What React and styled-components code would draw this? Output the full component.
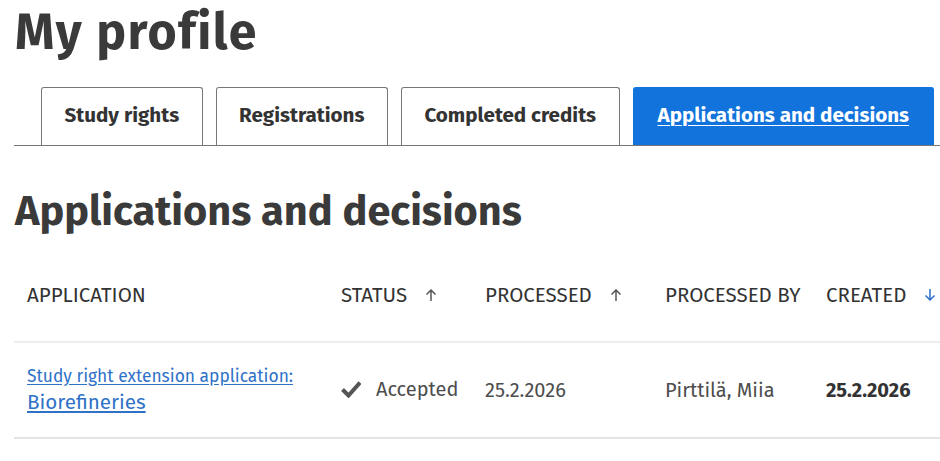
import React from 'react';
import styled, { createGlobalStyle } from 'styled-components';

const GlobalStyle = createGlobalStyle`
  html, body {
    margin: 0;
    padding: 0;
    background: #fff;
  }
  body {
    font-family: 'Fira Sans', Lato, 'Noto Sans', sans-serif;
    color: #333;
  }
`;

const tabs = [
  { label: 'Study rights' },
  { label: 'Registrations' },
  { label: 'Completed credits' },
  { label: 'Applications and decisions', active: true }
];

const columns = [
  { label: 'Application', width: 314 },
  { label: 'Status', width: 144, sort: 'up' },
  { label: 'Processed', width: 180, sort: 'up' },
  { label: 'Processed by', width: 161 },
  { label: 'Created', width: 127, sort: 'down', active: true }
];

const SortArrow = ({ dir, active }) => (
  <Arrow viewBox="0 0 12 14" width="12" height="14" $active={active}>
    {dir === 'up' ? (
      <path d="M6 13V2M1.5 6.5L6 2l4.5 4.5" />
    ) : (
      <path d="M6 1v11M1.5 7.5L6 12l4.5-4.5" />
    )}
  </Arrow>
);

const CheckIcon = () => (
  <svg viewBox="0 0 20 18" width="20" height="18">
    <path d="M1.5 9.5l6 6L19 2.5" fill="none" stroke="#555" strokeWidth="4" strokeLinecap="butt" />
  </svg>
);

const App = () => (
  <>
    <GlobalStyle />
    <Page>
      <Title>My profile</Title>
      <TabBar>
        {tabs.map(tab => (
          <Tab key={tab.label} $active={tab.active}>
            <TabLabel $active={tab.active}>{tab.label}</TabLabel>
          </Tab>
        ))}
      </TabBar>

      <SubTitle>Applications and decisions</SubTitle>

      <Table>
        <colgroup>
          {columns.map(col => (
            <col key={col.label} style={{ width: col.width }} />
          ))}
        </colgroup>
        <thead>
          <tr>
            {columns.map(col => (
              <Th key={col.label}>
                <ThInner>
                  {col.label}
                  {col.sort && <SortArrow dir={col.sort} active={col.active} />}
                </ThInner>
              </Th>
            ))}
          </tr>
        </thead>
        <tbody>
          <tr>
            <Td>
              <AppLink href="#">
                <LinkType>Study right extension application:</LinkType>
                <LinkName>Biorefineries</LinkName>
              </AppLink>
            </Td>
            <Td>
              <Status>
                <CheckIcon />
                Accepted
              </Status>
            </Td>
            <Td>25.2.2026</Td>
            <Td>Pirttilä, Miia</Td>
            <Td $bold>25.2.2026</Td>
          </tr>
        </tbody>
      </Table>
    </Page>
  </>
);

// === Styled Components ===

const Page = styled.div`
  padding: 0 0 0 14px;
  width: 926px;
`;

const Title = styled.h1`
  margin: 0;
  padding: 3px 0 0 1px;
  font-size: 50px;
  line-height: 58px;
  font-weight: 700;
  color: #3a3a3a;
  letter-spacing: 1.4px;
`;

const TabBar = styled.div`
  display: flex;
  gap: 13px;
  margin-top: 26px;
  padding-left: 27px;
  border-bottom: 1px solid #777;
`;

const Tab = styled.div`
  display: flex;
  flex-shrink: 0;
  align-items: center;
  justify-content: center;
  height: 57px;
  padding: 0 ${p => (p.$active ? '24px' : '22.5px')};
  border: 1px solid ${p => (p.$active ? '#1173db' : '#777')};
  border-bottom: none;
  border-radius: 3px 3px 0 0;
  background: ${p => (p.$active ? '#1173db' : '#fff')};
`;

const TabLabel = styled.span`
  margin-top: -3px;
  white-space: nowrap;
  font-size: 20.6px;
  font-weight: 700;
  color: ${p => (p.$active ? '#fff' : '#333')};
  text-decoration: ${p => (p.$active ? 'underline' : 'none')};
  text-underline-offset: 3px;
  text-decoration-thickness: 1px;
`;

const SubTitle = styled.h2`
  margin: 39px 0 0 1px;
  font-size: 41.5px;
  line-height: 52px;
  font-weight: 700;
  color: #3a3a3a;
`;

const Table = styled.table`
  width: 926px;
  margin-top: 8px;
  border-collapse: collapse;
  table-layout: fixed;
`;

const Th = styled.th`
  height: 92px;
  padding: 4px 0 0 13px;
  text-align: left;
  font-size: 20.5px;
  font-weight: 400;
  text-transform: uppercase;
  color: #333;
  border-bottom: 2px solid #eeeeee;
`;

const ThInner = styled.span`
  display: inline-flex;
  align-items: center;
  gap: 18px;
  white-space: nowrap;
`;

const Arrow = styled.svg`
  fill: none;
  stroke: ${p => (p.$active ? '#2a6fc9' : '#555')};
  stroke-width: 1.5;
`;

const Td = styled.td`
  height: 94px;
  padding: 0 0 0 13px;
  font-size: 20px;
  font-weight: ${p => (p.$bold ? 700 : 400)};
  color: ${p => (p.$bold ? '#333' : '#4d4d4d')};
  border-bottom: 2px solid #e4e4e4;
  white-space: nowrap;
`;

const AppLink = styled.a`
  display: flex;
  flex-direction: column;
  color: #2f72c8;
  text-decoration: underline;
  text-underline-offset: 2px;
`;

const LinkType = styled.span`
  font-size: 17.4px;
  line-height: 24px;
`;

const LinkName = styled.span`
  font-size: 20.6px;
  line-height: 26px;
`;

const Status = styled.span`
  display: inline-flex;
  align-items: center;
  gap: 15px;
`;

export default App;
